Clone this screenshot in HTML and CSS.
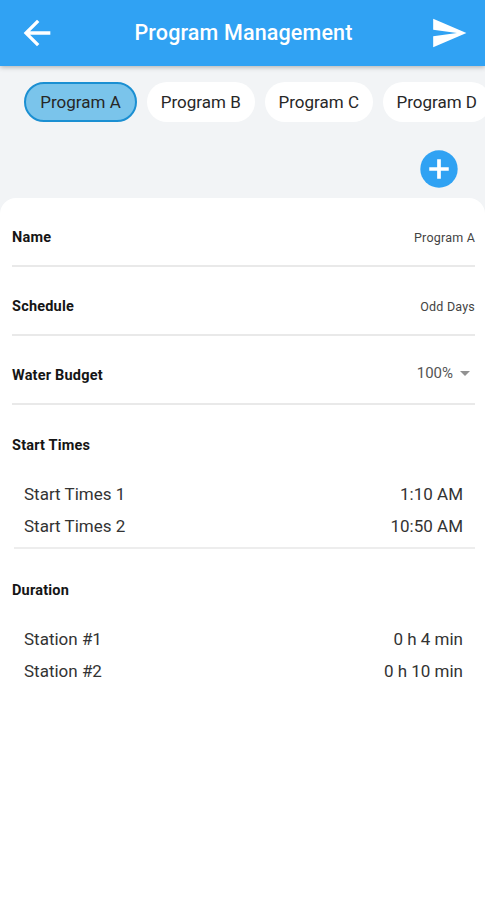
FILE: index.html
```html
<!DOCTYPE html>
<html lang="en">
<head>
<meta charset="utf-8">
<title>Program Management</title>
<link rel="stylesheet" href="styles.css">
</head>
<body>
<header class="app-bar">
  <svg class="back" viewBox="0 0 24 24" aria-hidden="true"><path d="M20 11H7.83l5.59-5.59L12 4l-8 8 8 8 1.41-1.41L7.83 13H20v-2z"/></svg>
  <h1>Program Management</h1>
  <svg class="send" viewBox="0 0 24 24" aria-hidden="true"><path d="M2.01 21L23 12 2.01 3 2 10l15 2-15 2z"/></svg>
</header>
<nav class="chips">
  <span class="chip active">Program A</span>
  <span class="chip">Program B</span>
  <span class="chip">Program C</span>
  <span class="chip">Program D</span>
</nav>
<div class="actions">
  <svg class="add" viewBox="0 0 37 37" aria-hidden="true"><circle cx="18.5" cy="18.5" r="18.2"/><path d="M18.5 9v19M9 18.5h19"/></svg>
</div>
<main class="panel">
  <section class="row"><h2>Name</h2><span class="value">Program A</span></section>
  <section class="row"><h2>Schedule</h2><span class="value">Odd Days</span></section>
  <section class="row"><h2>Water Budget</h2><span class="select">100%<i class="caret"></i></span></section>
  <section class="group">
    <h2>Start Times</h2>
    <div class="item"><span>Start Times 1</span><span class="time">1:10 AM</span></div>
    <div class="item"><span>Start Times 2</span><span class="time">10:50 AM</span></div>
  </section>
  <hr class="divider">
  <section class="group">
    <h2>Duration</h2>
    <div class="item"><span>Station #1</span><span class="time">0 h 4 min</span></div>
    <div class="item"><span>Station #2</span><span class="time">0 h 10 min</span></div>
  </section>
</main>
</body>
</html>
```
FILE: styles.css
```css
* { box-sizing: border-box; }
body {
  margin: 0;
  height: 900px;
  display: flex;
  flex-direction: column;
  overflow: hidden;
  background: #f2f4f6;
  color: #333;
  font-family: Roboto, "Liberation Sans", sans-serif;
}
h1, h2 { margin: 0; }
.app-bar {
  flex: none;
  height: 66px;
  padding: 0 17px 1px;
  display: flex;
  align-items: center;
  justify-content: space-between;
  background: #30a2f3;
  color: #fff;
  box-shadow: 0 1px 5px rgba(0, 0, 0, .3);
}
.app-bar h1 { font-size: 21.5px; font-weight: 500; letter-spacing: .15px; line-height: 26px; }
.back { width: 40px; height: 40px; fill: #fff; }
.send { width: 38px; height: 38px; fill: #fff; }
.chips {
  flex: none;
  display: flex;
  gap: 9.5px;
  padding: 16px 0 0 24px;
}
.chip {
  flex: none;
  width: 108.5px;
  height: 40px;
  border-radius: 20px;
  background: #fff;
  color: #272727;
  font-size: 17px;
  line-height: 40px;
  text-align: center;
}
.chip.active {
  width: 113px;
  border: 2px solid #1b8fd2;
  background: #7ac4eb;
  line-height: 36px;
}
.actions {
  flex: none;
  height: 76px;
  padding: 28px 27px 0 0;
  display: flex;
  justify-content: flex-end;
}
.add { width: 38px; height: 38px; fill: #30a2f3; stroke: #fff; stroke-width: 3.6; }
.add circle { stroke: none; }
.panel {
  flex: 1;
  padding: 0 10px 0 12px;
  border-radius: 16px 16px 0 0;
  background: #fff;
}
.row {
  height: 69px;
  padding-top: 11px;
  display: flex;
  align-items: center;
  justify-content: space-between;
  border-bottom: 2px solid #e9e9e9;
}
h2 {
  color: #151515;
  font-size: 14.5px;
  font-weight: 700;
  letter-spacing: .2px;
  line-height: 20px;
}
.row h2 { padding-top: 2px; }
.value { font-size: 12.5px; letter-spacing: .2px; color: #444; }
.select {
  display: flex;
  align-items: center;
  gap: 7px;
  padding: 0 5px 5px 0;
  color: #555;
  font-size: 15px;
}
.caret {
  margin-top: 2px;
  border: 5px solid transparent;
  border-top-color: #929292;
  border-bottom: 0;
}
.group { padding-top: 31px; height: 142px; }
.group:last-child { padding-top: 32px; }
.divider {
  height: 2px;
  margin: 0 0 0 2px;
  border: 0;
  background: #ededed;
}
.group h2 { margin-bottom: 22px; }
.item {
  display: flex;
  justify-content: space-between;
  padding: 0 12px;
  height: 32px;
  font-size: 17px;
  line-height: 32px;
}
```
